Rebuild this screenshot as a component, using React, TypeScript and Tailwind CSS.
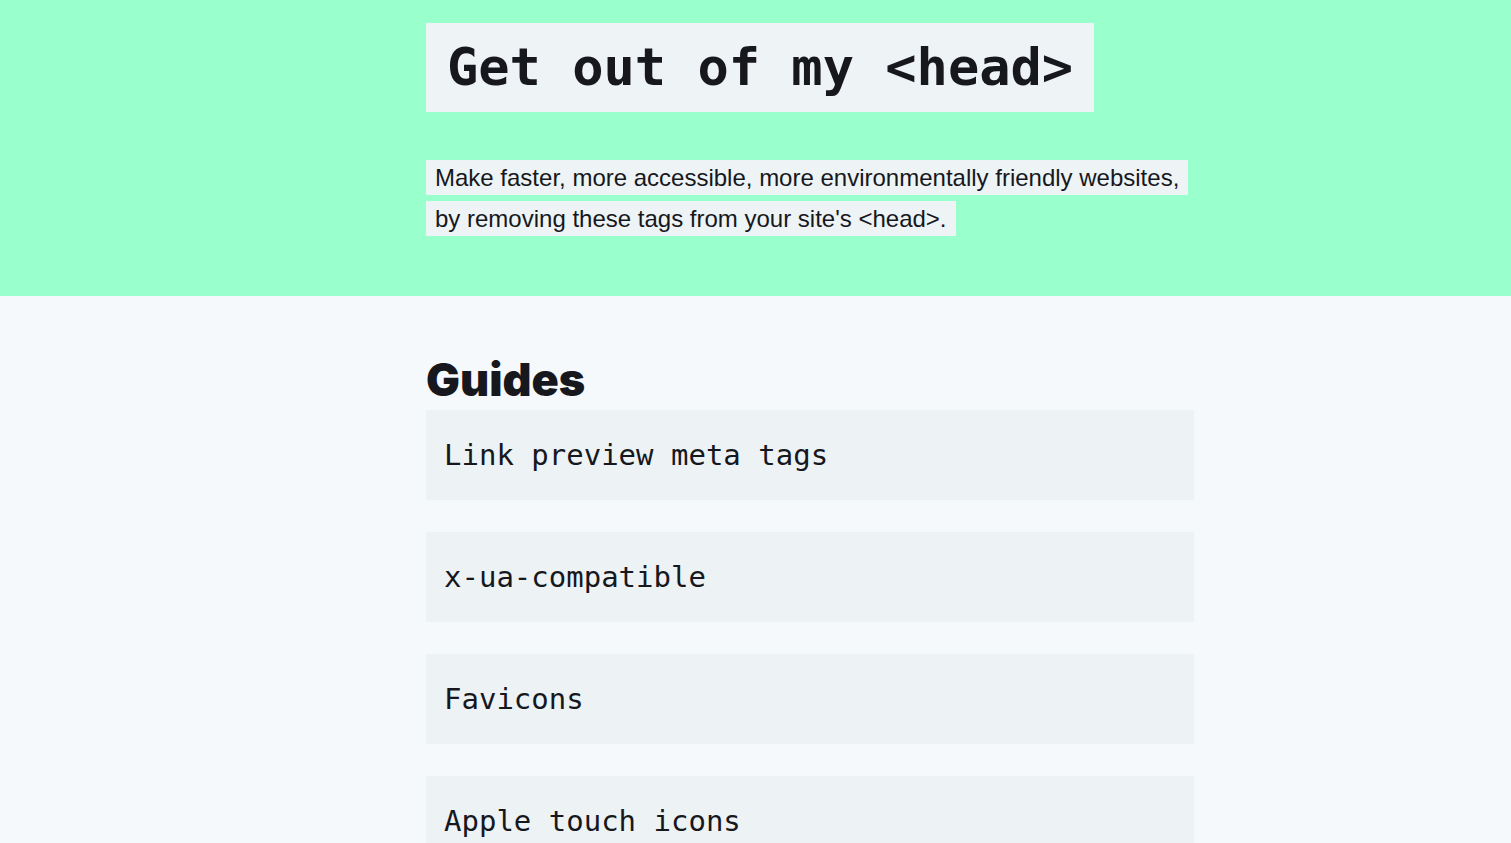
const guides = [
  "Link preview meta tags",
  "x-ua-compatible",
  "Favicons",
  "Apple touch icons",
  "Theme color",
];

export default function App() {
  return (
    <div className="min-h-screen bg-[#f5f9fc] text-[#16181d]">
      {/* Header */}
      <header className="h-[296px] bg-[#99ffcc]">
        <div className="mx-auto w-[877px] pl-[109px] pt-[23px]">
          <h1 className="inline-block h-[89px] bg-[#eef3f5] pl-[21px] pr-[21px] pt-[10px] font-['DejaVu_Sans_Mono',monospace] text-[52px] font-bold leading-[68px]">
            Get out of my &lt;head&gt;
          </h1>
          <p className="mt-[45px] w-[800px] font-['Liberation_Sans',Arial,sans-serif] text-[24px] leading-[41px]">
            <span className="box-decoration-clone bg-[#eef3f5] px-[9px] py-[4px]">
              Make faster, more accessible, more environmentally friendly websites,
              <br />
              by removing these tags from your site's &lt;head&gt;.
            </span>
          </p>
        </div>
      </header>

      {/* Guides */}
      <main className="mx-auto w-[877px] pl-[109px] pt-[54px]">
        <h2 className="font-['Inter',sans-serif] text-[45px] font-black leading-[60px]">
          Guides
        </h2>
        <ul className="flex flex-col gap-[32px]">
          {guides.map((g) => (
            <li
              key={g}
              className="flex h-[90px] items-center bg-[#edf2f5] pl-[18px] pt-[2px] font-['DejaVu_Sans_Mono',monospace] text-[29px]"
            >
              {g}
            </li>
          ))}
        </ul>
      </main>
    </div>
  );
}
